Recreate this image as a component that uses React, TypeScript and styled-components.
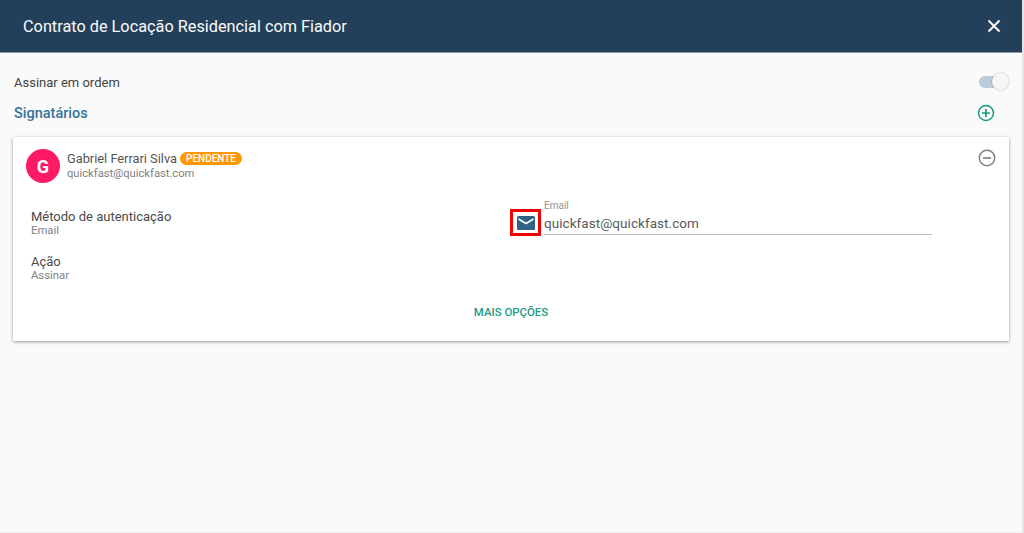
import * as React from 'react'
import styled, { createGlobalStyle } from 'styled-components'

const GlobalStyle = createGlobalStyle`
  html, body {
    margin: 0;
    padding: 0;
    height: 100%;
    background: #fafafa;
    font-family: Roboto, "Liberation Sans", sans-serif;
  }
  #root { height: 100%; }
`

const Page = styled.div`
  width: 1024px;
  height: 533px;
  box-sizing: border-box;
  overflow: hidden;
  background: #fafafa;
  border-right: 2px solid #e2e4e6;
  border-bottom: 1px solid #f0f0f0;
`
const Header = styled.header`
  height: 53px;
  box-sizing: border-box;
  display: flex;
  align-items: center;
  justify-content: space-between;
  padding: 0 21px 0 23px;
  background: #23405a;
  border-bottom: 1px solid #8a9aa8;
`
const Title = styled.h1`
  margin: 0;
  font-size: 16.3px;
  font-weight: 400;
  color: #fafafa;
`
const CloseButton = styled.button`
  display: flex;
  padding: 0;
  border: 0;
  background: none;
`
const Content = styled.main`
  padding: 18px 13px 0 13px;
`
const OrderRow = styled.div`
  display: flex;
  align-items: center;
  justify-content: space-between;
  height: 22px;
  padding-left: 1px;
  font-size: 13px;
  color: #444;
`
const Toggle = styled.div`
  position: relative;
  width: 28px;
  height: 12px;
  margin-right: 2px;
  border-radius: 6px;
  background: #b9ccdc;
`
const Knob = styled.span`
  position: absolute;
  top: -3px;
  right: -2px;
  width: 17px;
  height: 17px;
  border-radius: 50%;
  background: #f6f6f6;
  box-shadow: 0 0 2px rgba(0, 0, 0, 0.3);
`
const SectionRow = styled.div`
  display: flex;
  align-items: center;
  justify-content: space-between;
  margin-top: 9px;
  height: 22px;
  padding: 0 14px 0 1px;
`
const SectionTitle = styled.h2`
  margin: 0;
  font-size: 14.5px;
  font-weight: 500;
  color: #35729c;
`
const Card = styled.section`
  position: relative;
  height: 204px;
  box-sizing: border-box;
  margin-top: 13px;
  padding: 12px 14px 0 14px;
  background: #fff;
  box-shadow: 0 1px 3px rgba(0, 0, 0, 0.4);
`
const Signer = styled.div`
  display: flex;
  align-items: center;
  gap: 7px;
  margin-left: -1px;
`
const Avatar = styled.div`
  width: 34px;
  height: 34px;
  border-radius: 50%;
  display: flex;
  align-items: center;
  justify-content: center;
  background: #ff1a66;
  color: #fff;
  font-size: 18px;
  font-weight: 700;
`
const NameLine = styled.div`
  display: flex;
  align-items: center;
  gap: 3px;
  font-size: 12.8px;
  line-height: 14px;
  color: #555;
`
const Badge = styled.span`
  height: 13px;
  padding: 0 6px;
  border-radius: 7px;
  background: #ff9800;
  color: #fff;
  font-size: 10px;
  font-weight: 500;
  line-height: 13px;
`
const SignerEmail = styled.div`
  margin-top: 1px;
  font-size: 11.2px;
  line-height: 14px;
  color: #808080;
`
const RemoveButton = styled.button`
  position: absolute;
  top: 12px;
  right: 13px;
  display: flex;
  padding: 0;
  border: 0;
  background: none;
`
const Details = styled.div`
  display: grid;
  grid-template-columns: 479px 1fr;
  align-items: start;
  margin-top: 26px;
  padding-left: 4px;
`
const InfoColumn = styled.div`
  display: flex;
  flex-direction: column;
  gap: 17px;
`
const InfoTitle = styled.div`
  font-size: 13px;
  line-height: 15px;
  color: #4a4a4a;
`
const InfoValue = styled.div`
  font-size: 11.3px;
  line-height: 13px;
  color: #808080;
`
const EmailField = styled.div`
  display: flex;
  align-items: flex-end;
  gap: 3px;
  margin-top: -9px;
`
const IconFrame = styled.div`
  width: 31px;
  height: 27px;
  box-sizing: border-box;
  border: 3px solid #f00000;
  display: flex;
  align-items: center;
  justify-content: center;
  margin-bottom: -1px;
`
const FieldBody = styled.div`
  width: 388px;
  border-bottom: 1px solid #bdbdbd;
  padding-bottom: 3px;
`
const FieldLabel = styled.div`
  font-size: 10px;
  line-height: 12px;
  color: #949494;
`
const FieldValue = styled.div`
  margin-top: 3px;
  font-size: 13.5px;
  line-height: 16px;
  letter-spacing: 0.05px;
  color: #5a5a5a;
`
const MoreButton = styled.button`
  position: absolute;
  left: 0;
  right: 0;
  top: 168px;
  padding: 0;
  border: 0;
  background: none;
  font-family: inherit;
  font-size: 11.4px;
  font-weight: 500;
  color: #1d9c80;
`

const App = () => (
  <Page>
    <GlobalStyle />
    <Header>
      <Title>Contrato de Locação Residencial com Fiador</Title>
      <CloseButton aria-label="Fechar">
        <svg width="14" height="14" viewBox="0 0 14 14">
          <path d="M1.5 1.5 L12.5 12.5 M12.5 1.5 L1.5 12.5" stroke="#fafafa" strokeWidth="2" />
        </svg>
      </CloseButton>
    </Header>
    <Content>
      <OrderRow>
        Assinar em ordem
        <Toggle><Knob /></Toggle>
      </OrderRow>
      <SectionRow>
        <SectionTitle>Signatários</SectionTitle>
        <svg width="18" height="18" viewBox="0 0 18 18" fill="none" stroke="#1a9c7c">
          <circle cx="9" cy="9" r="7.5" strokeWidth="1.5" />
          <path d="M9 5 V13 M5 9 H13" strokeWidth="1.7" />
        </svg>
      </SectionRow>
      <Card>
        <Signer>
          <Avatar>G</Avatar>
          <div>
            <NameLine>Gabriel Ferrari Silva <Badge>PENDENTE</Badge></NameLine>
            <SignerEmail>quickfast@quickfast.com</SignerEmail>
          </div>
        </Signer>
        <RemoveButton aria-label="Remover">
          <svg width="18" height="18" viewBox="0 0 18 18" fill="none" stroke="#808080">
            <circle cx="9" cy="9" r="7.7" strokeWidth="1.5" />
            <path d="M5 9 H13" strokeWidth="1.7" />
          </svg>
        </RemoveButton>
        <Details>
          <InfoColumn>
            <div>
              <InfoTitle>Método de autenticação</InfoTitle>
              <InfoValue>Email</InfoValue>
            </div>
            <div>
              <InfoTitle>Ação</InfoTitle>
              <InfoValue>Assinar</InfoValue>
            </div>
          </InfoColumn>
          <EmailField>
            <IconFrame>
              <svg width="18" height="14" viewBox="0 0 18 14">
                <rect width="18" height="14" rx="1.5" fill="#2f6288" />
                <path d="M1.5 3 L9 7.5 L16.5 3" fill="none" stroke="#fff" strokeWidth="1.6" />
              </svg>
            </IconFrame>
            <FieldBody>
              <FieldLabel>Email</FieldLabel>
              <FieldValue>quickfast@quickfast.com</FieldValue>
            </FieldBody>
          </EmailField>
        </Details>
        <MoreButton>MAIS OPÇÕES</MoreButton>
      </Card>
    </Content>
  </Page>
)

export default App
